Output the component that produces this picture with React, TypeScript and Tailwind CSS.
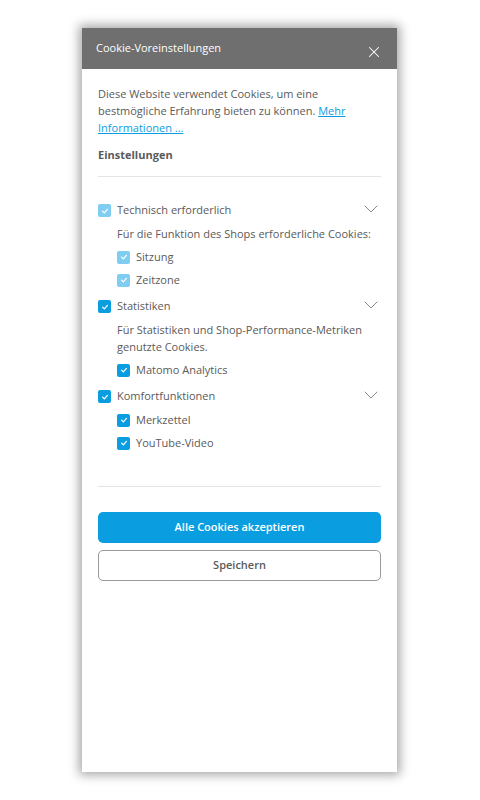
import { ChevronDown, X } from "lucide-react";

function Check({ light = false }: { light?: boolean }) {
  return (
    <span
      className={`flex h-[13px] w-[13px] shrink-0 items-center justify-center rounded-[2px] ${
        light ? "bg-[#7fcdf0]" : "bg-[#0a9ee0]"
      }`}
    >
      <svg viewBox="0 0 10 10" className="h-[8px] w-[8px]">
        <path d="M2 5.2 L4.2 7.3 L8 3" fill="none" stroke="white" strokeWidth="1.6" strokeLinecap="round" strokeLinejoin="round" />
      </svg>
    </span>
  );
}

function Group({
  title,
  light,
  desc,
  items,
}: {
  title: string;
  light?: boolean;
  desc?: string;
  items: string[];
}) {
  return (
    <div>
      <div className="flex h-[24px] items-center">
        <Check light={light} />
        <span className="ml-[6px] flex-1">{title}</span>
        <ChevronDown className="-mt-[3px] -mr-[2px] h-[24px] w-[24px] text-[#8a8a8a]" strokeWidth={1} />
      </div>
      <div className="pl-[19px]">
        {desc && <p className="mt-[2px] mb-[4px] leading-[17px]">{desc}</p>}
        {items.map((it) => (
          <div key={it} className="flex h-[23px] items-center">
            <Check light={light} />
            <span className="ml-[6px]">{it}</span>
          </div>
        ))}
      </div>
    </div>
  );
}

export default function App() {
  return (
    <div className="min-h-[800px] bg-white pt-[28px] font-['Open_Sans',sans-serif]">
      <div className="ml-[82px] flex h-[744px] w-[315px] flex-col bg-white shadow-[0_0_10px_3px_rgba(0,0,0,0.35)]">
        <div className="flex h-[41px] items-center justify-between bg-[#6f6f6f] pl-[14px] pr-[14px] text-white">
          <span className="text-[11px]">Cookie-Voreinstellungen</span>
          <X className="mt-[6px] h-[18px] w-[18px]" strokeWidth={1.4} />
        </div>
        <div className="px-[16px] pt-[16px] text-[11px] text-[#5a5a5a]">
          <p className="leading-[17px]">
            Diese Website verwendet Cookies, um eine bestmögliche Erfahrung bieten zu können.{" "}
            <a className="text-[#0a9ee0] underline">Mehr Informationen ...</a>
          </p>
          <h2 className="mt-[11px] font-bold">Einstellungen</h2>
          <div className="mt-[12px] h-px bg-[#e4e4e4]" />
          <div className="mt-[22px] flex flex-col gap-[3px]">
            <Group
              title="Technisch erforderlich"
              light
              desc="Für die Funktion des Shops erforderliche Cookies:"
              items={["Sitzung", "Zeitzone"]}
            />
            <Group
              title="Statistiken"
              desc="Für Statistiken und Shop-Performance-Metriken genutzte Cookies."
              items={["Matomo Analytics"]}
            />
            <Group title="Komfortfunktionen" items={["Merkzettel", "YouTube-Video"]} />
          </div>
          <div className="mt-[31px] h-px bg-[#e4e4e4]" />
          <button className="mt-[25px] h-[31px] w-full rounded-[5px] bg-[#0a9ee0] text-[11px] font-semibold text-white">
            Alle Cookies akzeptieren
          </button>
          <button className="mt-[7px] h-[31px] w-full rounded-[5px] border border-[#9a9a9a] bg-white text-[11px] font-semibold text-[#5a5a5a]">
            Speichern
          </button>
        </div>
      </div>
    </div>
  );
}
